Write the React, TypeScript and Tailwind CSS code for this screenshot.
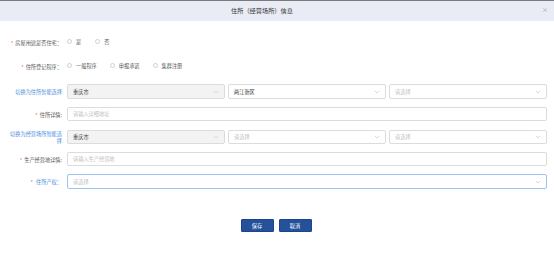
import React from "react";

const font = { fontFamily: '"Noto Sans CJK SC", "Noto Sans", sans-serif' };

function Chevron() {
  return (
    <svg width="6" height="4" viewBox="0 0 6 4" className="shrink-0">
      <path d="M0.8 0.8 L3 3 L5.2 0.8" fill="none" stroke="#c8c8c8" strokeWidth="0.7" />
    </svg>
  );
}

function Select({ text, placeholder, disabled, focus }: { text?: string; placeholder?: string; disabled?: boolean; focus?: boolean }) {
  return (
    <div
      className={`flex-1 h-full flex items-center justify-between pl-[5px] pr-[5px] rounded-[2px] border ${
        focus ? "border-[#9cc3f2]" : "border-[#dcdcdc]"
      } ${disabled ? "bg-[#f3f3f3]" : "bg-white"}`}
    >
      <span className={`text-[5.2px] leading-none ${text ? "text-[#333]" : "text-[#c0c0c0]"}`}>{text ?? placeholder}</span>
      <Chevron />
    </div>
  );
}

function Input({ placeholder }: { placeholder: string }) {
  return (
    <div className="flex-1 h-full flex items-center pl-[5px] rounded-[2px] border border-[#dcdcdc] bg-white">
      <span className="text-[5.2px] leading-none text-[#c0c0c0]">{placeholder}</span>
    </div>
  );
}

function Label({ children, star, blue }: { children: React.ReactNode; star?: boolean; blue?: boolean }) {
  return (
    <div className={`w-[62px] pl-[8px] shrink-0 text-right text-[5.2px] leading-[7px] ${blue ? "text-[#4a8fe0]" : "text-[#555]"}`}>
      {star && <span className="text-[#e05050] mr-[2px]">*</span>}
      {children}
    </div>
  );
}

function Radio({ label }: { label: string }) {
  return (
    <div className="flex items-center gap-[4px]">
      <span className="w-[5px] h-[5px] rounded-full border border-[#cfcfcf] bg-white" />
      <span className="text-[5.2px] leading-none text-[#555]">{label}</span>
    </div>
  );
}

export default function App() {
  return (
    <div className="w-[554px] h-[255px] bg-white overflow-hidden" style={font}>
      <div className="h-[21px] border-t border-[#7a7a7a] bg-[#e9ecf4] flex items-center justify-center relative pr-[30px]">
        <span className="text-[6.2px] text-[#333] leading-none">住所（经营场所）信息</span>
        <span className="absolute right-[6px] top-[6px] text-[6px] text-[#999] leading-none">×</span>
      </div>

      <div className="pr-[7px]">
        <div className="mt-[15px] h-[12px] flex items-center gap-[5px]">
          <Label star>房屋用途是否住宅：</Label>
          <div className="flex items-center gap-[14px]">
            <Radio label="是" />
            <Radio label="否" />
          </div>
        </div>

        <div className="mt-[12px] h-[12px] flex items-center gap-[5px]">
          <Label star>住所登记程序：</Label>
          <div className="flex items-center gap-[13px]">
            <Radio label="一般程序" />
            <Radio label="申报承诺" />
            <Radio label="集群注册" />
          </div>
        </div>

        <div className="mt-[12px] h-[15px] flex items-center gap-[5px]">
          <Label blue>切换为住所智能选择</Label>
          <div className="flex-1 h-full flex gap-[3px]">
            <Select text="重庆市" disabled />
            <Select text="两江新区" />
            <Select placeholder="请选择" />
          </div>
        </div>

        <div className="mt-[8px] h-[14px] flex items-center gap-[5px]">
          <Label star>住所详情:</Label>
          <Input placeholder="请输入详细地址" />
        </div>

        <div className="mt-[9px] h-[14px] flex items-center gap-[5px]">
          <Label blue>
            切换为经营场所智能选
            <br />
            择
          </Label>
          <div className="flex-1 h-full flex gap-[3px]">
            <Select text="重庆市" disabled />
            <Select placeholder="请选择" />
            <Select placeholder="请选择" />
          </div>
        </div>

        <div className="mt-[8px] h-[14px] flex items-center gap-[5px]">
          <Label star>生产经营地详情:</Label>
          <Input placeholder="请输入生产经营地" />
        </div>

        <div className="mt-[8px] h-[15px] flex items-center gap-[5px]">
          <div className="w-[62px] shrink-0 text-right text-[5.2px] leading-[7px] text-[#4a8fe0]">
            <span className="text-[#e05050] mr-[3px]">*</span>住所产权：
          </div>
          <div className="flex-1 h-full flex">
            <Select placeholder="请选择" focus />
          </div>
        </div>
      </div>

      <div className="mt-[30px] flex justify-center gap-[5px] pr-[2px]">
        <button className="w-[33px] h-[13px] bg-[#25509a] border border-[#1d4488] text-white text-[5.2px] leading-none rounded-[1px]">保存</button>
        <button className="w-[33px] h-[13px] bg-[#25509a] border border-[#1d4488] text-white text-[5.2px] leading-none rounded-[1px]">取消</button>
      </div>
    </div>
  );
}
